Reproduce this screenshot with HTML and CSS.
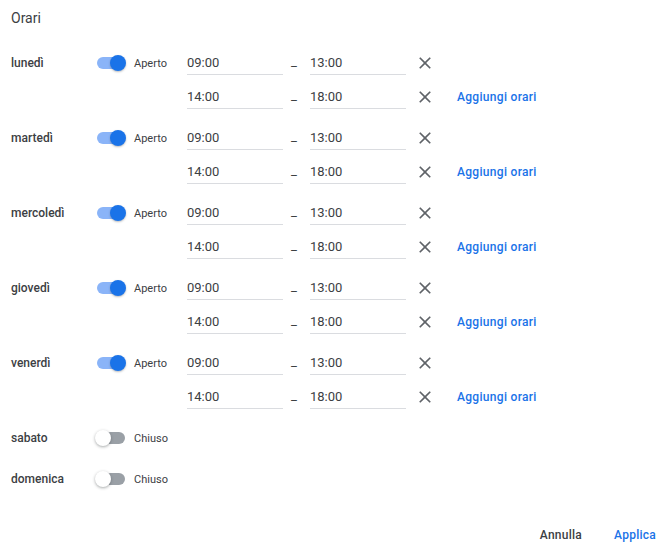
FILE: index.html
```html
<!DOCTYPE html>
<html lang="it">
<head>
<meta charset="utf-8">
<title>Orari</title>
<link rel="stylesheet" href="styles.css">
</head>
<body>
<div class="dialog">
  <h1 class="title">Orari</h1>
  <div class="days">

    <div class="day">
      <div class="day-head">
        <span class="day-name">lunedì</span>
        <span class="switch on"><span class="track"></span><span class="thumb"></span></span>
        <span class="status">Aperto</span>
      </div>
      <div class="slots">
        <div class="slot">
          <span class="field">09:00</span><span class="sep">_</span><span class="field">13:00</span>
          <span class="remove"><svg viewBox="0 0 24 24" width="20" height="20"><path d="M19 6.41L17.59 5 12 10.59 6.41 5 5 6.41 10.59 12 5 17.59 6.41 19 12 13.41 17.59 19 19 17.59 13.41 12z"/></svg></span>
        </div>
        <div class="slot">
          <span class="field">14:00</span><span class="sep">_</span><span class="field">18:00</span>
          <span class="remove"><svg viewBox="0 0 24 24" width="20" height="20"><path d="M19 6.41L17.59 5 12 10.59 6.41 5 5 6.41 10.59 12 5 17.59 6.41 19 12 13.41 17.59 19 19 17.59 13.41 12z"/></svg></span>
          <span class="add">Aggiungi orari</span>
        </div>
      </div>
    </div>

    <div class="day">
      <div class="day-head">
        <span class="day-name">martedì</span>
        <span class="switch on"><span class="track"></span><span class="thumb"></span></span>
        <span class="status">Aperto</span>
      </div>
      <div class="slots">
        <div class="slot">
          <span class="field">09:00</span><span class="sep">_</span><span class="field">13:00</span>
          <span class="remove"><svg viewBox="0 0 24 24" width="20" height="20"><path d="M19 6.41L17.59 5 12 10.59 6.41 5 5 6.41 10.59 12 5 17.59 6.41 19 12 13.41 17.59 19 19 17.59 13.41 12z"/></svg></span>
        </div>
        <div class="slot">
          <span class="field">14:00</span><span class="sep">_</span><span class="field">18:00</span>
          <span class="remove"><svg viewBox="0 0 24 24" width="20" height="20"><path d="M19 6.41L17.59 5 12 10.59 6.41 5 5 6.41 10.59 12 5 17.59 6.41 19 12 13.41 17.59 19 19 17.59 13.41 12z"/></svg></span>
          <span class="add">Aggiungi orari</span>
        </div>
      </div>
    </div>

    <div class="day">
      <div class="day-head">
        <span class="day-name">mercoledì</span>
        <span class="switch on"><span class="track"></span><span class="thumb"></span></span>
        <span class="status">Aperto</span>
      </div>
      <div class="slots">
        <div class="slot">
          <span class="field">09:00</span><span class="sep">_</span><span class="field">13:00</span>
          <span class="remove"><svg viewBox="0 0 24 24" width="20" height="20"><path d="M19 6.41L17.59 5 12 10.59 6.41 5 5 6.41 10.59 12 5 17.59 6.41 19 12 13.41 17.59 19 19 17.59 13.41 12z"/></svg></span>
        </div>
        <div class="slot">
          <span class="field">14:00</span><span class="sep">_</span><span class="field">18:00</span>
          <span class="remove"><svg viewBox="0 0 24 24" width="20" height="20"><path d="M19 6.41L17.59 5 12 10.59 6.41 5 5 6.41 10.59 12 5 17.59 6.41 19 12 13.41 17.59 19 19 17.59 13.41 12z"/></svg></span>
          <span class="add">Aggiungi orari</span>
        </div>
      </div>
    </div>

    <div class="day">
      <div class="day-head">
        <span class="day-name">giovedì</span>
        <span class="switch on"><span class="track"></span><span class="thumb"></span></span>
        <span class="status">Aperto</span>
      </div>
      <div class="slots">
        <div class="slot">
          <span class="field">09:00</span><span class="sep">_</span><span class="field">13:00</span>
          <span class="remove"><svg viewBox="0 0 24 24" width="20" height="20"><path d="M19 6.41L17.59 5 12 10.59 6.41 5 5 6.41 10.59 12 5 17.59 6.41 19 12 13.41 17.59 19 19 17.59 13.41 12z"/></svg></span>
        </div>
        <div class="slot">
          <span class="field">14:00</span><span class="sep">_</span><span class="field">18:00</span>
          <span class="remove"><svg viewBox="0 0 24 24" width="20" height="20"><path d="M19 6.41L17.59 5 12 10.59 6.41 5 5 6.41 10.59 12 5 17.59 6.41 19 12 13.41 17.59 19 19 17.59 13.41 12z"/></svg></span>
          <span class="add">Aggiungi orari</span>
        </div>
      </div>
    </div>

    <div class="day">
      <div class="day-head">
        <span class="day-name">venerdì</span>
        <span class="switch on"><span class="track"></span><span class="thumb"></span></span>
        <span class="status">Aperto</span>
      </div>
      <div class="slots">
        <div class="slot">
          <span class="field">09:00</span><span class="sep">_</span><span class="field">13:00</span>
          <span class="remove"><svg viewBox="0 0 24 24" width="20" height="20"><path d="M19 6.41L17.59 5 12 10.59 6.41 5 5 6.41 10.59 12 5 17.59 6.41 19 12 13.41 17.59 19 19 17.59 13.41 12z"/></svg></span>
        </div>
        <div class="slot">
          <span class="field">14:00</span><span class="sep">_</span><span class="field">18:00</span>
          <span class="remove"><svg viewBox="0 0 24 24" width="20" height="20"><path d="M19 6.41L17.59 5 12 10.59 6.41 5 5 6.41 10.59 12 5 17.59 6.41 19 12 13.41 17.59 19 19 17.59 13.41 12z"/></svg></span>
          <span class="add">Aggiungi orari</span>
        </div>
      </div>
    </div>

    <div class="day">
      <div class="day-head">
        <span class="day-name">sabato</span>
        <span class="switch off"><span class="track"></span><span class="thumb"></span></span>
        <span class="status">Chiuso</span>
      </div>
    </div>

    <div class="day">
      <div class="day-head">
        <span class="day-name">domenica</span>
        <span class="switch off"><span class="track"></span><span class="thumb"></span></span>
        <span class="status">Chiuso</span>
      </div>
    </div>

  </div>
  <div class="actions">
    <span class="btn cancel">Annulla</span>
    <span class="btn apply">Applica</span>
  </div>
</div>
</body>
</html>
```

FILE: styles.css
```css
* { box-sizing: border-box; }
html, body {
  margin: 0;
  padding: 0;
  background: #ffffff;
  font-family: Roboto, "Liberation Sans", Arial, sans-serif;
  color: #3c4043;
}
.dialog {
  width: 665px;
  height: 551px;
  padding: 8px 9px 0 11px;
}
.title {
  margin: 0;
  font-size: 14px;
  line-height: 20px;
  font-weight: 400;
  color: #3c4043;
}
.days {
  margin-top: 18px;
  display: flex;
  flex-direction: column;
}
.day {
  display: flex;
  align-items: flex-start;
  margin-bottom: 7px;
}
.day-head {
  display: flex;
  align-items: center;
  width: 176px;
  height: 34px;
  flex: none;
}
.day-name {
  width: 84px;
  font-size: 12px;
  font-weight: 500;
  color: #3c4043;
}
.switch {
  position: relative;
  width: 32px;
  height: 16px;
  flex: none;
}
.switch .track {
  position: absolute;
  left: 2px;
  top: 2px;
  width: 28px;
  height: 12px;
  border-radius: 6px;
}
.switch .thumb {
  position: absolute;
  top: 0;
  width: 16px;
  height: 16px;
  border-radius: 50%;
  box-shadow: 0 1px 2px rgba(60, 64, 67, 0.35);
}
.switch.on .track { background: #8ab4f8; }
.switch.on .thumb { left: 15px; background: #1a73e8; }
.switch.off .track { background: #9aa0a6; }
.switch.off .thumb { left: 0; background: #ffffff; box-shadow: 0 1px 3px rgba(60, 64, 67, 0.45); }
.status {
  margin-left: 7px;
  font-size: 11px;
  color: #3c4043;
}
.slots {
  display: flex;
  flex-direction: column;
}
.slot {
  display: flex;
  align-items: center;
  height: 34px;
}
.field {
  width: 96px;
  height: 24px;
  padding-top: 4px;
  font-size: 13px;
  line-height: 16px;
  color: #3c4043;
  border-bottom: 1px solid #dadce0;
}
.sep {
  width: 27px;
  padding-left: 8px;
  font-size: 13px;
  line-height: 16px;
  color: #3c4043;
  margin-top: -2px;
}
.remove {
  display: flex;
  align-items: center;
  justify-content: center;
  width: 24px;
  height: 24px;
  margin-left: 7px;
}
.remove svg { fill: #5f6368; display: block; }
.add {
  margin-left: 20px;
  font-size: 12px;
  font-weight: 500;
  letter-spacing: 0.3px;
  color: #1a73e8;
}
.actions {
  display: flex;
  justify-content: flex-end;
  gap: 32px;
  margin-top: 24px;
}
.btn {
  font-size: 12px;
  font-weight: 500;
  letter-spacing: 0.25px;
  line-height: 16px;
}
.cancel { color: #3c4043; }
.apply { color: #1a73e8; }
```
